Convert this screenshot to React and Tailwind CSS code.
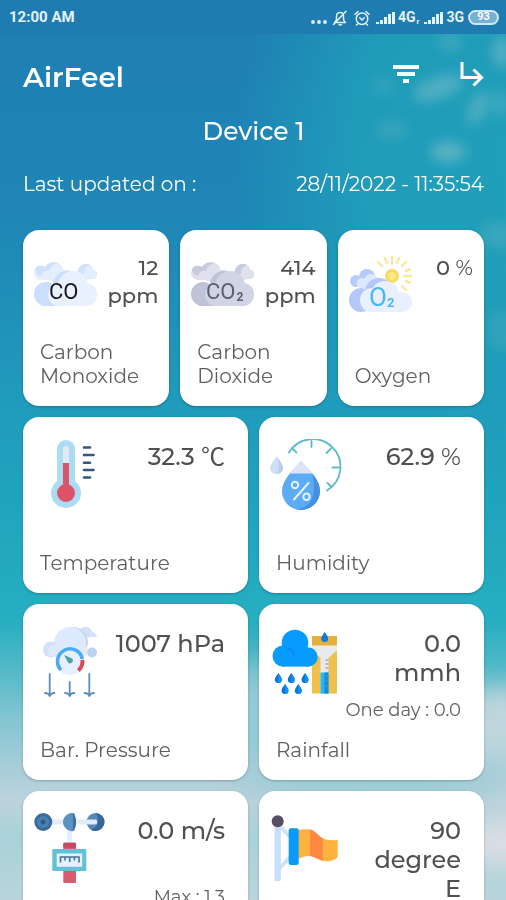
const CloudIcon = ({ back, puff, side, main, text, formula, sub }) => (
  <svg viewBox="0 0 64 64" className="w-16 h-16 shrink-0" aria-hidden="true">
    <g fill={puff}>
      <circle cx="7" cy="21" r="7" />
      <circle cx="20" cy="20" r="10" />
      <rect x="5" y="18" width="34" height="10" rx="5" />
    </g>
    <path d="M1 17a7 7 0 0 1 10-2c2-4 8-6 13-4-5 1-8 4-9 8-4-1-7 1-8 5-4-1-6-4-6-7z" fill={back} />
    <g fill={puff}>
      <circle cx="52" cy="20" r="8" />
      <rect x="42" y="18" width="21" height="9" rx="4" />
    </g>
    <path d="M44 20a8 8 0 0 1 12-7c-4 1-6 4-6 9h-6z" fill={back} />
    <g fill={side}>
      <circle cx="12" cy="42" r="12" />
      <circle cx="33" cy="33" r="14" />
      <rect x="8" y="42" width="30" height="12" />
    </g>
    <g fill={main}>
      <circle cx="39" cy="34" r="15" />
      <circle cx="25" cy="43" r="11" />
      <rect x="15" y="31" width="48" height="23" rx="11" />
    </g>
    <text x="15" y="47" fontSize="22" fontFamily="Roboto, sans-serif" fill={text}>
      {formula}
      {sub && <tspan dx="1" dy="2" fontSize="12" fontWeight="700">{sub}</tspan>}
    </text>
  </svg>
)

const CoIcon = () => (
  <CloudIcon back="#d0e1fb" puff="#e3eefe" side="#cbdefc" main="#e9f1fe" text="#15191f" formula="CO" />
)

const Co2Icon = () => (
  <CloudIcon back="#c8cbdc" puff="#dfe1ee" side="#bfc3d7" main="#d1d4e4" text="#5b5e70" formula="CO" sub="2" />
)

const OxygenIcon = () => (
  <svg viewBox="0 0 64 64" className="w-16 h-16 shrink-0" aria-hidden="true">
    <g stroke="#fde58c" strokeWidth="2" strokeLinecap="round">
      <path d="M43 5v7M62 24h-7M57 10l-4 4M29 10l4 4M57 38l-4-4M36 6l2 5M50 6l-2 5M61 17l-4 2M61 31l-4-2" />
    </g>
    <circle cx="43" cy="24" r="7" fill="#fbdc60" />
    <circle cx="43" cy="24" r="4" fill="#fde884" />
    <g fill="#b7cbfb">
      <circle cx="7" cy="29" r="6" />
      <circle cx="18" cy="25" r="8" />
    </g>
    <g fill="#dde8fe">
      <circle cx="13" cy="31" r="5" />
      <circle cx="22" cy="29" r="7" />
      <rect x="8" y="28" width="24" height="8" rx="4" />
    </g>
    <g fill="#b4c8f8">
      <circle cx="12" cy="48" r="12" />
      <circle cx="30" cy="40" r="14" />
    </g>
    <g fill="#e8effe">
      <circle cx="23" cy="48" r="12" />
      <circle cx="36" cy="43" r="14" />
      <rect x="12" y="40" width="51" height="20" rx="10" />
    </g>
    <text x="20" y="54" fontSize="26" fontFamily="Roboto, sans-serif" fill="#48b7f5">
      O
      <tspan fontSize="13" fontWeight="700" dy="1">2</tspan>
    </text>
  </svg>
)

const ThermometerIcon = () => (
  <svg viewBox="0 0 72 72" className="w-[72px] h-[72px] shrink-0" aria-hidden="true">
    <rect x="23" y="1" width="18" height="50" rx="9" fill="#aadcf3" />
    <circle cx="32" cy="54" r="15" fill="#aadcf3" />
    <rect x="29" y="7" width="6" height="24" rx="3" fill="#e3e7f0" />
    <rect x="29" y="24" width="6" height="24" fill="#dd5468" />
    <circle cx="32" cy="54" r="9" fill="#dd5468" />
    <g stroke="#36557f" strokeWidth="2.6" strokeLinecap="round">
      <path d="M50 8.500h6M50 16h9.500M50 23.700h6M50 31h9.500M50 38.500h6" />
    </g>
  </svg>
)

const HumidityIcon = () => (
  <svg viewBox="0 0 72 72" className="w-[72px] h-[72px] shrink-0" fill="none" aria-hidden="true">
    <g stroke="#5fb9cb" strokeWidth="1.800" strokeLinecap="round">
      <path d="M19 13.500A27.700 27.700 0 1 1 57 51.500" />
      <path d="M41.500 2v6M69 28.500h-6.500M61 9.500l-4.500 4.500M22 9l4.500 4.500M61.500 48l-4-4" />
    </g>
    <path d="M6.700 17.500c3 4 6.300 8 6.300 11.500a6.400 6.200 0 0 1-12.900 0c0-3.500 3.500-7.500 6.600-11.500z" fill="#cddff7" />
    <path d="M6.700 17.500c3 4 6.300 8 6.300 11.500a6.400 6.200 0 0 1-6.300 6.200c3-4 3-13 0-17.700z" fill="#b8cdee" />
    <path d="M31 22c8 9 19 19 19 30a19 19 0 0 1-38 0c0-11 11-21 19-30z" fill="#5cabf5" />
    <path d="M42 34c5 6 8 12 8 18a19 19 0 0 1-24 18.200c14-1 22-12 16-36.200z" fill="#4690e3" />
    <path d="M31 22c4 4.500 8 8.500 11.500 12.500h-23C23 30.500 27 26.500 31 22z" fill="#dde5f9" />
    <g stroke="#e6f3ff" strokeWidth="2">
      <circle cx="25" cy="46" r="3.200" />
      <circle cx="36.500" cy="57.700" r="3.200" />
      <path d="M38.500 44L24 60.500" strokeLinecap="round" />
    </g>
  </svg>
)

const PressureIcon = () => (
  <svg viewBox="0 0 72 72" className="w-[72px] h-[72px] shrink-0" fill="none" aria-hidden="true">
    <path d="M46 3c5-4 11-2 12 3 3 0 4 2 5 5H48z" fill="#d3e2fa" />
    <circle cx="39" cy="16" r="15" fill="#c5d7f4" />
    <circle cx="36" cy="17" r="16" fill="#dde9fc" />
    <circle cx="17" cy="23.500" r="8" fill="#d3e2fb" />
    <rect x="14" y="19" width="40" height="12" rx="6" fill="#dde9fc" />
    <circle cx="58" cy="26.500" r="5" fill="#bed2f2" />
    <circle cx="36" cy="35" r="14" fill="#e6effd" />
    <path d="M27 44A12.500 12.500 0 1 1 48.300 33" stroke="#4aaaf3" strokeWidth="3.600" />
    <path d="M48.400 34a12.500 12.500 0 0 1-4 10.500" stroke="#db4b55" strokeWidth="4" />
    <path d="M30 29l8 3.500a2.700 2.700 0 1 1-4 4z" fill="#4d9fa8" />
    <g stroke="#5a8db7" strokeWidth="1.800" strokeLinecap="round" strokeLinejoin="round">
      <path d="M15.700 48v22M11 67c2 0 4 1 4.700 3 .7-2 2.700-3 4.700-3" />
      <path d="M35.700 56v14M31 67c2 0 4 1 4.700 3 .7-2 2.700-3 4.700-3" />
      <path d="M55.300 48v22M50.600 67c2 0 4 1 4.700 3 .7-2 2.700-3 4.700-3" />
    </g>
  </svg>
)

const drops = [[8.3, 47], [21.3, 47], [35, 47], [15, 58], [28.3, 58]]

const RainIcon = () => (
  <svg viewBox="0 0 72 72" className="w-[72px] h-[72px] shrink-0" aria-hidden="true">
    <rect x="42" y="10" width="25" height="57.500" rx="1" fill="#efc04b" />
    <rect x="42" y="10" width="25" height="9.500" rx="1" fill="#e5b03c" />
    <path d="M42 19.500h25v5L58.500 32v35.500h-8V32L42 24.500z" fill="#e9eaec" />
    <path d="M50.500 46.500h8v21h-8z" fill="#27b8f2" />
    <path d="M54.500 46.500h4v21h-4z" fill="#188bd6" />
    <path d="M55.500 34h3M55.500 38h3M55.500 42h3M55.500 50h3M55.500 55h3M55.500 60h3" stroke="#7d8ba0" strokeWidth="1" />
    <path d="M54.700 6c1.500 2.500 3.500 4.500 3.500 6.500a3.500 3.500 0 0 1-7 0c0-2 2-4 3.500-6.500z" fill="#1478d6" />
    <g fill="#079aff">
      <circle cx="25" cy="17" r="13.300" />
      <circle cx="13" cy="30" r="10.500" />
      <circle cx="38" cy="31" r="9.700" />
      <rect x="12" y="25" width="27" height="15.600" />
    </g>
    <path d="M17 23c4 0 7 3 7 8" stroke="#0784e6" strokeWidth="1.500" fill="none" />
    {drops.map(([x, y]) => (
      <g key={`${x}-${y}`} transform={`translate(${x} ${y})`}>
        <path d="M0 0c1.500 2.500 3.500 4.500 3.500 6.500a3.500 3.500 0 0 1-7 0C-3.500 4.500-1.500 2.500 0 0z" fill="#1173d8" />
        <path d="M0 0c1.500 2.500 3.500 4.500 3.500 6.500A3.500 3.500 0 0 1 0 10z" fill="#0a94f5" />
      </g>
    ))}
  </svg>
)

const WindIcon = () => (
  <svg viewBox="0 0 72 72" className="w-[72px] h-[72px] shrink-0" aria-hidden="true">
    <rect x="14" y="6.500" width="42" height="5" fill="#e2ecfb" />
    <rect x="33.300" y="14" width="4.500" height="17" fill="#e2ecfb" />
    <circle cx="9.300" cy="9" r="9" fill="#3b6b9b" />
    <circle cx="9" cy="9" r="6" fill="#4a80b2" />
    <circle cx="9" cy="9" r="2.500" fill="#2f5a88" />
    <path d="M40 0c2.500 5 2.500 13 0 18-6 1-11-4-11-9s5-10 11-9z" fill="#5b92c1" />
    <path d="M39 0c4 5 4 13 0 18z" fill="#3c6e9f" />
    <circle cx="61.500" cy="9" r="9" fill="#5489b9" />
    <path d="M61.500 0a9 9 0 0 1 0 18 8 8 0 0 1-5-1.500C65 15 66 5 61.500 0z" fill="#37679a" />
    <rect x="51" y="6.500" width="12" height="5" rx="1.500" fill="#e2ecfb" />
    <rect x="29.300" y="29.700" width="12.700" height="40.300" rx="1" fill="#da5b6d" />
    <rect x="29.300" y="29.700" width="12.700" height="5" rx="1" fill="#c4495f" />
    <rect x="18.300" y="36" width="34" height="22" rx="1" fill="#62c2d4" />
    <rect x="22.700" y="40.500" width="25.500" height="13.300" fill="#e2f1fc" />
    <path d="M26.500 49.500v-5.500h18.500v5.500M31 44v3.500M35.700 44v5M40.400 44v3.500" stroke="#4a6f9d" strokeWidth="1.600" fill="none" />
  </svg>
)

const FlagIcon = () => (
  <svg viewBox="0 0 72 72" className="w-[72px] h-[72px] shrink-0" aria-hidden="true">
    <path d="M9 12l11 12M9 56l11-12" stroke="#cfe3fb" strokeWidth="4" />
    <rect x="4.500" y="10" width="6.300" height="58" rx="1" fill="#c6dffa" />
    <circle cx="7.700" cy="8.200" r="6" fill="#564d66" />
    <path d="M28 17c5-1 8-1 12-.5 5 1 8 6 12.700 8.800 5 2.500 9 2 15 1.700v17c-4 4-9 5-15 3.700C47 46 44 43.500 40 43c-4-.2-8 1-12 3z" fill="#ffb23e" />
    <path d="M40 16.500c5 1 8 6 12.700 8.800v22.400C47 46 44 43.500 40 43z" fill="#fe8843" />
    <rect x="18.700" y="15.300" width="10" height="36.700" rx="2" fill="#0a9afa" />
  </svg>
)

const gases = [
  { label: ['Carbon', 'Monoxide'], value: ['12', 'ppm'], Icon: CoIcon },
  { label: ['Carbon', 'Dioxide'], value: ['414', 'ppm'], Icon: Co2Icon },
  { label: ['Oxygen'], value: ['0'], symbol: '%', Icon: OxygenIcon },
]

const sensors = [
  { label: 'Temperature', value: ['32.3'], symbol: '℃', Icon: ThermometerIcon },
  { label: 'Humidity', value: ['62.9'], symbol: '%', Icon: HumidityIcon },
  { label: 'Bar. Pressure', value: ['1007 hPa'], Icon: PressureIcon },
  { label: 'Rainfall', value: ['0.0', 'mmh'], extra: 'One day : 0.0', Icon: RainIcon },
  { label: 'Wind Speed', value: ['0.0 m/s'], extra: 'Max : 1.3', Icon: WindIcon },
  { label: 'Wind Direction', value: ['90', 'degree', 'E'], Icon: FlagIcon },
]

const Reading = ({ value, symbol }) => (
  value.map((line) => (
    <span key={line} className="block">
      {line}
      {symbol && <span className="font-normal font-[Montserrat,'Noto_Sans_CJK_JP',sans-serif]"> {symbol}</span>}
    </span>
  ))
)

const GasCard = ({ label, value, symbol, Icon }) => (
  <article className="h-44 bg-white rounded-2xl shadow-sm shadow-black/20 px-[11px] pt-[22px] pb-[18px] flex flex-col justify-between">
    <div className="flex justify-between">
      <Icon />
      <p className="pt-[2px] -ml-2 text-right text-[21px] leading-7 font-medium text-[#505050] whitespace-nowrap">
        <Reading value={value} symbol={symbol} />
      </p>
    </div>
    <h2 className="px-[6px] text-[20px] leading-6 text-[#5f5f5f]">
      {label.map((line) => <span key={line} className="block">{line}</span>)}
    </h2>
  </article>
)

const SensorCard = ({ label, value, symbol, extra, Icon }) => (
  <article className="h-44 bg-white rounded-2xl shadow-sm shadow-black/20 pl-[11px] pr-[23px] pt-[22px] pb-[18px] flex flex-col justify-between">
    <div className="flex justify-between">
      <Icon />
      <div className="pt-[3px] text-right whitespace-nowrap">
        <p className="min-h-[58px] text-[24px] leading-[29px] font-medium text-[#505050]">
          <Reading value={value} symbol={symbol} />
        </p>
        {extra && <p className="mt-[11px] -ml-8 text-[18px] leading-6 text-[#5f5f5f]">{extra}</p>}
      </div>
    </div>
    <h2 className="px-[6px] text-[20px] leading-6 text-[#5f5f5f]">{label}</h2>
  </article>
)

const Signal = () => (
  <svg viewBox="0 0 19 14" className="w-[19px] h-[14px]" fill="#e3f2fb" aria-hidden="true">
    <rect x="0" y="11" width="3" height="2" />
    <rect x="4" y="9" width="3" height="4" />
    <rect x="8" y="6" width="3" height="7" />
    <rect x="12" y="3" width="3" height="10" />
    <rect x="16" y="1" width="3" height="12" />
  </svg>
)

const StatusBar = () => (
  <div className="h-[34px] pt-px pl-[9px] pr-[7px] flex items-center justify-between bg-[#1f7cb1] text-[#e3f2fb] font-[Roboto,sans-serif] font-bold">
    <span className="text-[15px]">12:00 AM</span>
    <div className="flex items-center text-[14px]">
      <svg viewBox="0 0 16 14" className="w-4 h-[14px] mr-[5px]" fill="#e3f2fb" aria-hidden="true">
        <circle cx="2" cy="11" r="1.900" />
        <circle cx="8" cy="11" r="1.900" />
        <circle cx="14" cy="11" r="1.900" />
      </svg>
      <svg viewBox="0 0 16 16" className="w-4 h-4 mr-[6px]" fill="none" stroke="#e3f2fb" strokeWidth="1.500" strokeLinecap="round" strokeLinejoin="round" aria-hidden="true">
        <path d="M2.500 12.500h11c-1.500-1-2-2-2-4V6.500C11.500 4 10 2.500 8 2.500S4.500 4 4.500 6.500v2c0 2-.5 3-2 4zM7 14.800h2.500M14 1.200L1.500 14.500" />
      </svg>
      <svg viewBox="0 0 16 16" className="w-4 h-4 mr-[6px]" fill="none" stroke="#e3f2fb" strokeWidth="1.500" strokeLinecap="round" aria-hidden="true">
        <circle cx="8" cy="8.700" r="5.800" />
        <path d="M1 4.200L4 1.500M15 4.200l-3-2.700M5.800 7.800L8 10l2.300-2.200M3.500 14l-1 1M12.500 14l1 1" />
      </svg>
      <Signal />
      <span className="ml-[3px]">4G</span>
      <span className="ml-px mr-[5px] self-end text-[8px]">r</span>
      <Signal />
      <span className="ml-[3px] mr-[4px]">3G</span>
      <span className="h-[15px] w-[31px] rounded-full border-2 border-[#d3e8f4] bg-[#78b0d2] text-white text-[11px] flex items-center justify-center">
        93
      </span>
    </div>
  </div>
)

// Sky fading down into pale haze, with soft clouds at the top right
const Sky = () => (
  <svg
    viewBox="0 0 506 900"
    preserveAspectRatio="none"
    className="absolute inset-0 w-full h-full"
    aria-hidden="true"
  >
    <defs>
      <linearGradient id="sky" x1="0" y1="0" x2="0" y2="1">
        <stop offset="0" stopColor="#1f7eb2" />
        <stop offset="0.240" stopColor="#1f86b6" />
        <stop offset="0.440" stopColor="#209abb" />
        <stop offset="0.580" stopColor="#20a6be" />
        <stop offset="0.690" stopColor="#26aec1" />
        <stop offset="0.740" stopColor="#50b8c7" />
        <stop offset="0.800" stopColor="#84c6d1" />
        <stop offset="0.850" stopColor="#a4cdd9" />
        <stop offset="0.890" stopColor="#bdd3dc" />
        <stop offset="0.930" stopColor="#a9d2d8" />
        <stop offset="1" stopColor="#b9d5db" />
      </linearGradient>
      <radialGradient id="glow" gradientUnits="userSpaceOnUse" cx="0" cy="0" r="1" gradientTransform="translate(506 150) scale(270 350)">
        <stop offset="0" stopColor="#209fba" />
        <stop offset="0.550" stopColor="#209fba" stopOpacity="0.900" />
        <stop offset="1" stopColor="#209fba" stopOpacity="0" />
      </radialGradient>
      <filter id="soft" x="-50%" y="-50%" width="200%" height="200%">
        <feGaussianBlur stdDeviation="6" />
      </filter>
      <filter id="haze" x="-50%" y="-50%" width="200%" height="200%">
        <feGaussianBlur stdDeviation="12" />
      </filter>
    </defs>
    <rect width="506" height="900" fill="url(#sky)" />
    <rect width="506" height="580" fill="url(#glow)" />
    <g fill="#7fc0cc" filter="url(#soft)">
      <ellipse cx="438" cy="88" rx="26" ry="11" opacity="0.500" transform="rotate(-20 438 88)" />
      <ellipse cx="478" cy="108" rx="9" ry="18" opacity="0.450" transform="rotate(25 478 108)" />
      <ellipse cx="500" cy="104" rx="7" ry="14" opacity="0.350" />
      <ellipse cx="448" cy="152" rx="18" ry="10" opacity="0.600" />
      <ellipse cx="392" cy="130" rx="16" ry="9" opacity="0.250" />
      <ellipse cx="384" cy="86" rx="12" ry="8" opacity="0.200" />
      <ellipse cx="502" cy="52" rx="10" ry="16" opacity="0.500" />
      <ellipse cx="450" cy="42" rx="12" ry="9" opacity="0.300" />
      <ellipse cx="500" cy="235" rx="20" ry="14" opacity="0.250" />
      <ellipse cx="502" cy="330" rx="14" ry="20" opacity="0.200" />
    </g>
    <g filter="url(#haze)">
      <ellipse cx="500" cy="725" rx="44" ry="38" fill="#bdd5dc" />
      <ellipse cx="506" cy="842" rx="50" ry="24" fill="#dadde4" />
      <ellipse cx="254" cy="700" rx="20" ry="40" fill="#a5ced7" opacity="0.700" />
      <ellipse cx="370" cy="785" rx="130" ry="12" fill="#94cad4" />
    </g>
  </svg>
)

const App = () => {
  return (
    <div className="relative h-screen overflow-hidden bg-[#1f8bb7] font-[Montserrat,Inter,sans-serif]">
      <Sky />
      <div className="relative h-full flex flex-col">
        <StatusBar />
        <main className="flex-1 min-h-0 overflow-y-auto [scrollbar-width:none] pl-[23px] pr-[22px] pb-6">
          <header className="pt-[25px] text-white">
            <div className="flex items-center justify-between">
              <h1 className="text-[28px] leading-9 font-semibold">AirFeel</h1>
              <div className="flex items-center gap-10">
                <button type="button" aria-label="Filter">
                  <svg viewBox="0 0 28 28" className="w-7 h-7 mb-1" fill="#ffffff" aria-hidden="true">
                    <rect x="1" y="4" width="26" height="4" />
                    <rect x="5" y="11" width="18" height="4" />
                    <rect x="11" y="18" width="6" height="4" />
                  </svg>
                </button>
                <button type="button" aria-label="Exit">
                  <svg viewBox="0 0 24 28" className="w-6 h-7 mb-1" fill="none" stroke="#ffffff" strokeWidth="3" aria-hidden="true">
                    <path d="M2 1v15.500h19M13.500 8.500l8 8-8 8" />
                  </svg>
                </button>
              </div>
            </div>
            <p className="mt-5 text-center text-[25px] leading-8 font-medium">Device 1</p>
            <div className="mt-[23px] flex justify-between text-[20px] leading-7">
              <span>Last updated on :</span>
              <time dateTime="2022-11-28T11:35:54">28/11/2022 - 11:35:54</time>
            </div>
          </header>

          <section className="mt-8 grid grid-cols-3 gap-[11px]">
            {gases.map((gas) => <GasCard key={gas.label.join(' ')} {...gas} />)}
          </section>
          <section className="mt-[11px] grid grid-cols-2 gap-[11px]">
            {sensors.map((sensor) => <SensorCard key={sensor.label} {...sensor} />)}
          </section>
        </main>
      </div>
    </div>
  )
}

export default App
